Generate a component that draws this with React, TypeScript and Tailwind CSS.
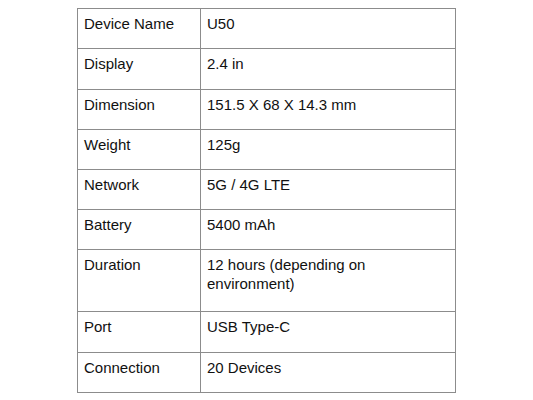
import React from 'react';

type Spec = { label: string; value: string; h: string };

const specs: Spec[] = [
  { label: 'Device Name', value: 'U50', h: 'h-[40px]' },
  { label: 'Display', value: '2.4 in', h: 'h-[41px]' },
  { label: 'Dimension', value: '151.5 X 68 X 14.3 mm', h: 'h-[40px]' },
  { label: 'Weight', value: '125g', h: 'h-[40px]' },
  { label: 'Network', value: '5G / 4G LTE', h: 'h-[40px]' },
  { label: 'Battery', value: '5400 mAh', h: 'h-[40px]' },
  { label: 'Duration', value: '12 hours (depending on environment)', h: 'h-[62px]' },
  { label: 'Port', value: 'USB Type-C', h: 'h-[41px]' },
  { label: 'Connection', value: '20 Devices', h: 'h-[40px]' },
];

const App: React.FC = () => {
  return (
    <div className="w-[533px] h-[400px] bg-white pt-[8px] pl-[77px] font-['Liberation_Sans',Arial,sans-serif] text-[15px] leading-[19px] text-[#111]">
      {/* spec table */}
      <div className="w-[379px] border-t border-l border-r border-[#8c8c8c]">
        {specs.map((s) => (
          <div key={s.label} className={`grid grid-cols-[123px_1fr] border-b border-[#8c8c8c] ${s.h}`}>
            <div className="border-r border-[#8c8c8c] pl-[6px] pt-[5px]">{s.label}</div>
            <div className="pl-[6px] pr-[8px] pt-[5px]">{s.value}</div>
          </div>
        ))}
      </div>
    </div>
  );
};

export default App;
